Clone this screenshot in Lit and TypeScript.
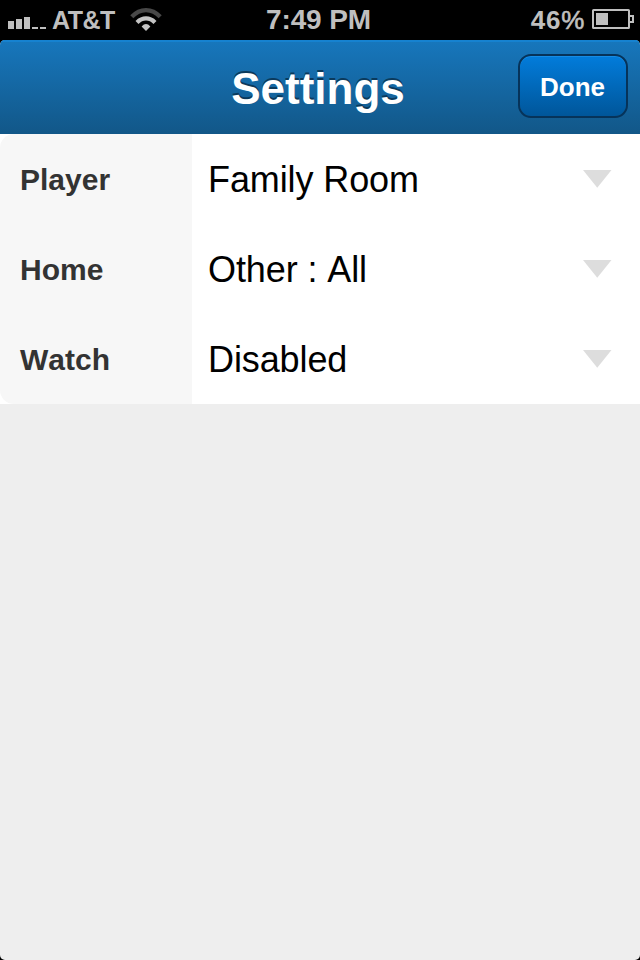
import { LitElement, html, css } from "lit";
import { customElement, property, state } from "lit/decorators.js";

@customElement("status-bar")
export class StatusBar extends LitElement {
  static styles = css`
    :host {
      display: grid;
      grid-template-columns: 1fr auto 1fr;
      height: 40px;
      line-height: 40px;
      background: #000;
      color: #bfbfbf;
      font-weight: bold;
    }
    .left, .right { display: flex; align-items: flex-start; }
    .right { justify-content: flex-end; }
    .bars { margin: 16px 0 0 8px; }
    .carrier { margin-left: 6px; font-size: 25px; letter-spacing: -0.5px; }
    .wifi { margin: 7px 0 0 15px; }
    .time { font-size: 28px; letter-spacing: -0.1px; padding-right: 3px; }
    .charge { font-size: 26px; letter-spacing: 0.7px; }
    .percent { font-weight: normal; -webkit-text-stroke: 0.6px #bfbfbf; }
    .battery { margin: 9px 6px 0 7px; }
    svg { display: block; flex: none; }
  `;

  render() {
    return html`
      <div class="left">
        <svg class="bars" width="38" height="13" fill="#bfbfbf" shape-rendering="crispEdges">
          <path d="M0 5h6v8H0zM8 3h6v10H8zM16 1h6v12h-6zM24 11h6v2h-6zM32 11h6v2h-6z" />
        </svg>
        <span class="carrier">AT&amp;T</span>
        <svg class="wifi" width="32" height="25" viewBox="0 0 32 25" fill="none">
          <path d="M1.8 9.8Q8 3.1 16 3.1T30.2 9.8" stroke="#484848" stroke-width="4.2" />
          <path d="M7 15.4Q11 11.4 16 11.4T25 15.4" stroke="#c4c4c4" stroke-width="4.2" />
          <path d="M11.6 19.5Q16 14.6 20.4 19.5L16 24Z" fill="#c4c4c4" />
        </svg>
      </div>
      <span class="time">7:49 PM</span>
      <div class="right">
        <span class="charge">46<span class="percent">%</span></span>
        <svg class="battery" width="42" height="20" viewBox="0 0 42 20" fill="none">
          <rect x="1" y="1" width="36" height="18" rx="0.6" stroke="#bfbfbf" stroke-width="2" />
          <path d="M38 7h3v6h-3" stroke="#bfbfbf" stroke-width="2" />
          <path d="M4 4h12v12H4z" fill="#bfbfbf" />
        </svg>
      </div>
    `;
  }
}

@customElement("setting-row")
export class SettingRow extends LitElement {
  @property() label = "";
  @property() value = "";

  static styles = css`
    :host { display: flex; height: 90px; line-height: 92px; font-kerning: none; }
    .label {
      flex: 0 0 172px;
      padding-left: 20px;
      color: #333;
      font-size: 30px;
      font-weight: bold;
    }
    .value {
      flex: 1;
      display: flex;
      height: 90px;
      justify-content: space-between;
      padding: 0 28px 0 16px;
      background: #fff;
      color: #000;
      font-size: 36px;
      letter-spacing: -0.1px;
    }
    svg { display: block; margin-top: 36px; }
  `;

  render() {
    return html`
      <div class="label">${this.label}</div>
      <div class="value">
        <span>${this.value}</span>
        <svg width="29" height="18" viewBox="0 0 29 18"><path d="M0 0h28.5L14.25 17.8z" fill="#ddd" /></svg>
      </div>
    `;
  }
}

@customElement("app-root")
export class AppRoot extends LitElement {
  @state() private settings = [
    { label: "Player", value: "Family Room" },
    { label: "Home", value: "Other : All" },
    { label: "Watch", value: "Disabled" },
  ];

  static styles = css`
    :host {
      display: flex;
      flex-direction: column;
      height: 960px;
      background: #000;
      font-family: "Liberation Sans", Arial, sans-serif;
    }
    .screen {
      flex: 1;
      overflow: hidden;
      border-radius: 5px;
      background: #eee;
    }
    .header {
      display: grid;
      grid-template-columns: 1fr auto 1fr;
      align-items: center;
      box-sizing: border-box;
      height: 94px;
      padding: 0 12px;
      background: linear-gradient(#1777bd, #125788);
      box-shadow: inset 0 2px #1682d0;
    }
    .title {
      grid-column: 2;
      margin: 0;
      padding: 3px 4px 0 0;
      color: #fff;
      font-size: 44px;
      line-height: 60px;
      text-shadow: 0 -2px 0 #0b3a5c;
    }
    .done {
      justify-self: end;
      box-sizing: border-box;
      width: 110px;
      height: 64px;
      margin-top: -2px;
      padding: 2px 1px 0 0;
      border: 2px solid #06335a;
      border-radius: 13px;
      background: linear-gradient(#027cdb, #00569a);
      background-clip: padding-box;
      box-shadow: inset 0 1px #158ce6;
      color: #fff;
      font: bold 26px "Liberation Sans", Arial, sans-serif;
    }
    .list { background: #fff; }
    .rows {
      border-radius: 14px 0 0 14px;
      overflow: hidden;
      background: #f7f7f7;
    }
  `;

  render() {
    return html`
      <status-bar></status-bar>
      <div class="screen">
        <header class="header">
          <h1 class="title">Settings</h1>
          <button class="done">Done</button>
        </header>
        <div class="list">
          <div class="rows">
            ${this.settings.map(
              (s) => html`<setting-row .label=${s.label} .value=${s.value}></setting-row>`
            )}
          </div>
        </div>
      </div>
    `;
  }
}
